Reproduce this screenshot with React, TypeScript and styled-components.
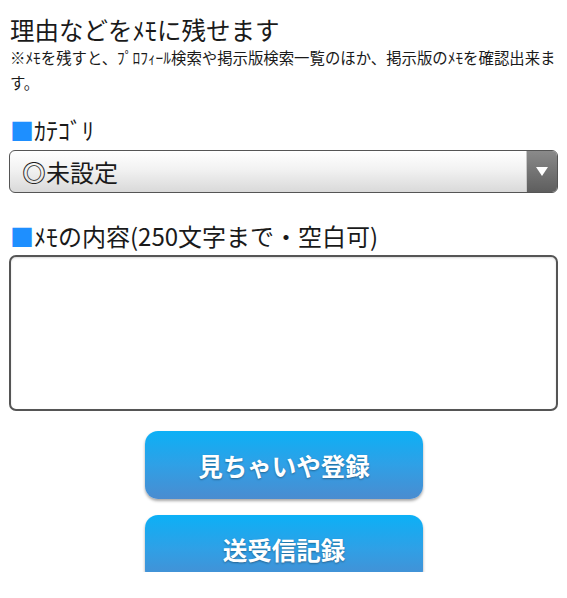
import * as React from 'react'
import styled, { createGlobalStyle } from 'styled-components'

const GlobalStyle = createGlobalStyle`
  html, body {
    margin: 0;
    padding: 0;
    background: #fff;
  }
  body {
    font-family: "Noto Sans CJK JP", "Noto Sans", sans-serif;
    color: #1a1a1a;
  }
`

const Page = styled.div`
  height: 572px;
  overflow: hidden;
  padding: 0 9px 0 10px;
  box-sizing: border-box;
`

const Title = styled.div`
  margin-top: 15px;
  font-size: 24.5px;
  line-height: 30px;
`

const Note = styled.div`
  font-size: 15.4px;
  line-height: 25px;
`

const Label = styled.div<{ $gap: number }>`
  margin-top: ${p => p.$gap}px;
  font-size: 24px;
  line-height: 30px;
  white-space: nowrap;

  &::before {
    content: "■";
    color: #1e8fff;
  }
`

const Select = styled.div`
  margin-top: 5px;
  margin-left: -1px;
  height: 43px;
  box-sizing: border-box;
  display: flex;
  border: 1.5px solid #555;
  border-radius: 6px;
  overflow: hidden;
  background: linear-gradient(#ffffff, #f2f2f2 45%, #d9d9d9);
`

const SelectText = styled.div`
  flex: 1;
  display: flex;
  align-items: center;
  padding-left: 12px;
  font-size: 24px;
`

const ArrowBox = styled.div`
  width: 30px;
  display: flex;
  align-items: center;
  justify-content: center;
  border-left: 1px solid #c8c8c8;
  background: linear-gradient(#8a8a8a, #5e5e5e);

  &::after {
    content: "";
    border-left: 6px solid transparent;
    border-right: 6px solid transparent;
    border-top: 9px solid #fff;
  }
`

const Memo = styled.div`
  margin-top: 4px;
  margin-left: -1px;
  height: 156px;
  box-sizing: border-box;
  border: 2px solid #555;
  border-radius: 7px;
  background: #fff;
  box-shadow: inset 0 1px 2px rgba(0, 0, 0, 0.15);
`

const Buttons = styled.div`
  margin-top: 20px;
  display: flex;
  flex-direction: column;
  align-items: center;
  gap: 16px;
`

const Button = styled.div`
  width: 278px;
  height: 68px;
  flex-shrink: 0;
  display: flex;
  align-items: center;
  justify-content: center;
  border-radius: 13px;
  background: linear-gradient(#0cb0f6, #2fa0e6 50%, #4a8cd0);
  box-shadow: 0 2px 3px rgba(0, 0, 0, 0.35);
  color: #fff;
  font-size: 24.5px;
  font-weight: 700;
  text-shadow: 0 1px 2px rgba(0, 0, 0, 0.35);
`

export default function App() {
  return (
    <Page>
      <GlobalStyle />
      <Title>理由などをﾒﾓに残せます</Title>
      <Note>※ﾒﾓを残すと、ﾌﾟﾛﾌｨｰﾙ検索や掲示版検索一覧のほか、掲示版のﾒﾓを確認出来ます。</Note>
      <Label $gap={20}>ｶﾃｺﾞﾘ</Label>
      <Select>
        <SelectText>◎未設定</SelectText>
        <ArrowBox />
      </Select>
      <Label $gap={28}>ﾒﾓの内容(250文字まで・空白可)</Label>
      <Memo />
      <Buttons>
        <Button>見ちゃいや登録</Button>
        <Button>送受信記録</Button>
      </Buttons>
    </Page>
  )
}
